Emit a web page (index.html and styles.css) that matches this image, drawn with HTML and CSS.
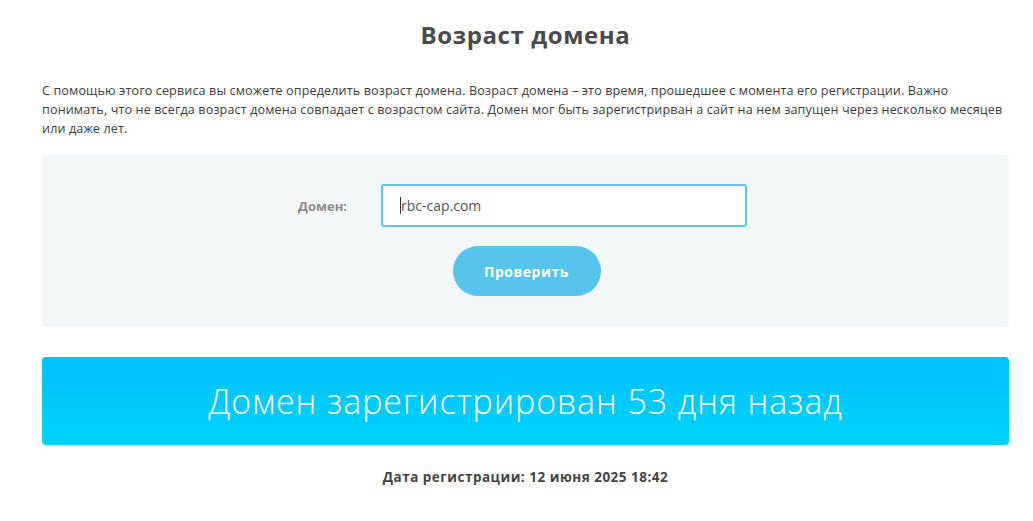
FILE: index.html
```html
<!DOCTYPE html>
<html lang="ru">
<head>
<meta charset="utf-8">
<link rel="stylesheet" href="styles.css">
</head>
<body>
<main class="page">
  <h1 class="title">Возраст домена</h1>
  <p class="intro">С помощью этого сервиса вы сможете определить возраст домена. Возраст домена – это время, прошедшее с момента его регистрации. Важно понимать, что не всегда возраст домена совпадает с возрастом сайта. Домен мог быть зарегистрирван а сайт на нем запущен через несколько месяцев или даже лет.</p>
  <section class="panel">
    <div class="row">
      <label class="label">Домен:</label>
      <div class="input"><span class="caret"></span>rbc-cap.com</div>
    </div>
    <button class="btn">Проверить</button>
  </section>
  <div class="banner">Домен зарегистрирован 53 дня назад</div>
  <p class="date">Дата регистрации: 12 июня 2025 18:42</p>
</main>
</body>
</html>
```
FILE: styles.css
```css
* { box-sizing: border-box; }
html, body { margin: 0; padding: 0; background: #fff; }
body { font-family: "Open Sans", "DejaVu Sans", sans-serif; color: #3a3a3a; }
.page { padding: 0 24px 0 42px; display: flex; flex-direction: column; }
.title {
  margin: 19px 0 0;
  text-align: center;
  font-size: 24px;
  font-weight: 700;
  color: #4a4a4a;
  line-height: 32px;
  letter-spacing: 0.6px;
}
.intro {
  margin: 30px 0 0;
  font-size: 12.6px;
  line-height: 19px;
  font-weight: 500;
  color: #3c3c3c;
  letter-spacing: 0.12px;
}
.panel {
  margin-top: 17px;
  background: #f4f7f8;
  border-radius: 4px;
  height: 172px;
  display: flex;
  flex-direction: column;
  align-items: center;
  padding-top: 29px;
}
.row { display: flex; align-items: center; margin-left: -6px; }
.label {
  width: 67px;
  font-size: 13px;
  font-weight: 700;
  color: #8a8a8a;
  margin-right: 16px;
  text-align: left;
}
.input {
  width: 366px;
  height: 43px;
  background: #fff;
  border: 2px solid #5cc6ee;
  border-radius: 3px;
  display: flex;
  align-items: center;
  padding-left: 17px;
  font-size: 14px;
  color: #555;
}
.caret { width: 1px; height: 17px; background: #333; }
.btn {
  margin-top: 19px;
  width: 148px;
  height: 50px;
  border: none;
  border-radius: 25px;
  background: #55c5ec;
  color: #fff;
  font-family: "Open Sans", sans-serif;
  font-weight: 700;
  font-size: 14px;
  letter-spacing: 0.5px;
  margin-left: 2px;
}
.banner {
  margin-top: 30px;
  height: 88px;
  border-radius: 4px;
  background: linear-gradient(#00c1fc, #00d2fe);
  color: #fff;
  font-size: 34px;
  font-weight: 300;
  display: flex;
  align-items: center;
  justify-content: center;
  letter-spacing: 0.9px;
}
.date {
  margin: 23px 0 0;
  text-align: center;
  font-size: 13.5px;
  font-weight: 700;
  color: #444;
  letter-spacing: 0.5px;
}
```
